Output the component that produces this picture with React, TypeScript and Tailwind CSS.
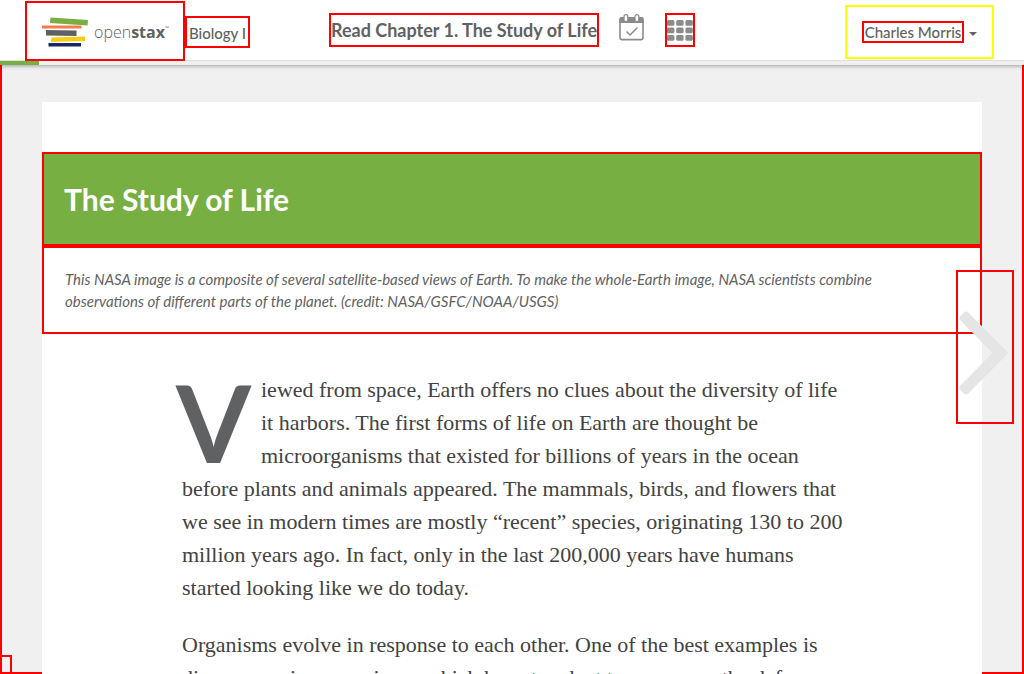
import React from "react";

function Logo() {
  return (
    <span className="flex items-center gap-[5px]">
      <svg viewBox="0 0 47 30" className="h-[30px] w-[47px] shrink-0" aria-hidden="true">
        <polygon points="8.500,0.500 46,3 45.500,8.500 8,6" fill="#77af42" />
        <polygon points="0,8.500 39.500,8.500 39.500,11.500 0,11.500" fill="#f37c4b" />
        <polygon points="4,13 34.500,13.500 34.500,19 4,18.500" fill="#5f6163" />
        <polygon points="9.500,20.500 43,19.500 43,24 9,25" fill="#f5cf17" />
        <polygon points="6.500,26 39,26 39,29.500 6.500,29.500" fill="#1b2764" />
      </svg>
      <span className="flex items-start font-['Open_Sans',sans-serif] text-[16px] leading-6">
        <span className="font-light">open</span>
        <span className="font-bold">stax</span>
        <span className="text-[5px] leading-4">™</span>
      </span>
    </span>
  );
}

function CalendarIcon() {
  return (
    <svg viewBox="0 0 25 27" className="h-[27px] w-[25px]" fill="none" aria-hidden="true">
      <path d="M1 6.500V24a1.600 1.600 0 0 0 1.600 1.600h19.800A1.600 1.600 0 0 0 24 24V6.500" stroke="#8b8b8b" strokeWidth="1.600" />
      <path d="M.2 9V5A2 2 0 0 1 2.200 3h20.600a2 2 0 0 1 2 2v4Z" fill="#8b8b8b" />
      <rect x="5" y="0.600" width="3.800" height="7" rx="1.900" fill="#fff" stroke="#8b8b8b" strokeWidth="1.200" />
      <rect x="16" y="0.600" width="3.800" height="7" rx="1.900" fill="#fff" stroke="#8b8b8b" strokeWidth="1.200" />
      <path d="m7.500 17.500 3.500 3.500 7.500-7.500" stroke="#8b8b8b" strokeWidth="1.500" />
    </svg>
  );
}

function GridIcon() {
  return (
    <svg viewBox="0 0 26 21" className="h-[21px] w-[26px]" fill="#8b8b8b" aria-hidden="true">
      {[0, 7.5, 15].map((y) =>
        [0, 9.2, 18.4].map((x) => <rect key={`${x}-${y}`} x={x} y={y} width="7.400" height="5.800" rx="1.500" />)
      )}
    </svg>
  );
}

function Header() {
  return (
    <header className="relative z-10 shadow-[0_1px_4px_rgba(0,0,0,0.35)]">
      <nav className="grid h-[61px] grid-cols-[1fr_auto_1fr] items-start border-b border-[#dedede] bg-white">
        <div className="flex items-start pl-[25px]">
          <a href="#home" aria-label="OpenStax home" className="mt-px flex h-[60px] w-[160px] items-center border-2 border-[#f00] pl-[15px] pt-[2px]">
            <Logo />
          </a>
          <a href="#course" className="mt-4 flex h-8 w-[65px] items-center justify-center whitespace-nowrap border-2 border-[#f00] pt-[2px] text-[15px] font-medium">
            Biology I
          </a>
        </div>
        <div className="mt-[13px] flex items-start">
          <h2 className="flex h-[34px] w-[270px] items-center justify-center whitespace-nowrap border-2 border-[#f00] text-[18px] font-bold">
            Read Chapter 1. The Study of Life
          </h2>
          <button type="button" aria-label="Calendar" className="ml-5 mt-px">
            <CalendarIcon />
          </button>
          <button type="button" aria-label="All steps" className="ml-[21px] flex h-[34px] w-[30px] items-center justify-center border-2 border-[#f00]">
            <GridIcon />
          </button>
        </div>
        <button
          type="button"
          className="mr-[30px] mt-[5px] flex h-[54px] w-[149px] items-center gap-[5px] justify-self-end border-2 border-[#ff0] pl-[15px] text-[15px] font-medium"
        >
          <span className="flex h-[22px] w-[102px] items-center justify-center whitespace-nowrap border-2 border-[#f00]">
            Charles Morris
          </span>
          <span className="mt-1 border-x-4 border-t-4 border-x-transparent border-t-[#5f6163]" />
        </button>
      </nav>
      <div className="h-1 bg-[#f0f0f0]">
        <div className="h-1 w-[39px] bg-[#77af42]" />
      </div>
    </header>
  );
}

function Reading() {
  return (
    <article className="mt-[37px] bg-white pt-[50px]">
      <h1 className="flex h-[94px] items-center border-2 border-[#f00] bg-[#77af42] pl-5 text-[30px] font-bold text-white">
        The Study of Life
      </h1>
      <p className="h-[88px] border-2 border-[#f00] px-[21px] pt-5 text-[15px] italic leading-[22px]">
        This NASA image is a composite of several satellite-based views of Earth. To make the whole-Earth image, NASA scientists combine
        <br />
        observations of different parts of the planet. (credit: NASA/GSFC/NOAA/USGS)
      </p>
      <div className="mx-auto mt-[39px] max-w-[660px] whitespace-nowrap font-['Liberation_Serif',serif] text-[22px] leading-[33px] text-[#424242]">
        <p className="mb-6">
          <span className="float-left -ml-[6px] mr-[9px] h-[99px] w-[76px] pt-[5px] font-['Lato',sans-serif] text-[108px] font-bold leading-[86px] text-[#5f6163]">
            V
          </span>
          iewed from space, Earth offers no clues about the diversity of life
          <br />
          it harbors. The first forms of life on Earth are thought be
          <br />
          microorganisms that existed for billions of years in the ocean
          <br />
          before plants and animals appeared. The mammals, birds, and flowers that
          <br />
          we see in modern times are mostly “recent” species, originating 130 to 200
          <br />
          million years ago. In fact, only in the last 200,000 years have humans
          <br />
          started looking like we do today.
        </p>
        <p>
          Organisms evolve in response to each other. One of the best examples is
          <br />
          disease causing organisms, which have to adapt to overcome the defenses
        </p>
      </div>
    </article>
  );
}

export default function App() {
  return (
    <div className="relative flex h-screen flex-col overflow-hidden bg-[#f0f0f0] font-['Lato',sans-serif] text-[#5f6163]">
      <Header />
      <main className="grid min-h-0 flex-1 grid-cols-[42px_1fr_42px] grid-rows-[minmax(0,1fr)]">
        <div className="flex items-end border-b-2 border-l-2 border-[#f00]">
          <div className="h-[17px] w-[10px] border-r-2 border-t-2 border-[#f00]" />
        </div>
        <Reading />
        <div className="border-b-2 border-r-2 border-[#f00]" />
      </main>
      <button
        type="button"
        aria-label="Next page"
        className="absolute right-[10px] top-[270px] flex h-[154px] w-[58px] items-center justify-center border-2 border-[#f00] pr-1 pt-3"
      >
        <svg viewBox="0 0 49 84" className="h-[84px] w-[49px] shrink-0" aria-hidden="true">
          <path d="M1 9Q-.5 7 1 5.500L5 1.500Q7 -.5 9 1.200L48 40.500Q49.500 42 48 43.500L9 82.800Q7 84.500 5 82.500L1 78.500Q-.5 76.500 1 75L33.500 42Z" fill="#e5e5e5" />
        </svg>
      </button>
    </div>
  );
}
